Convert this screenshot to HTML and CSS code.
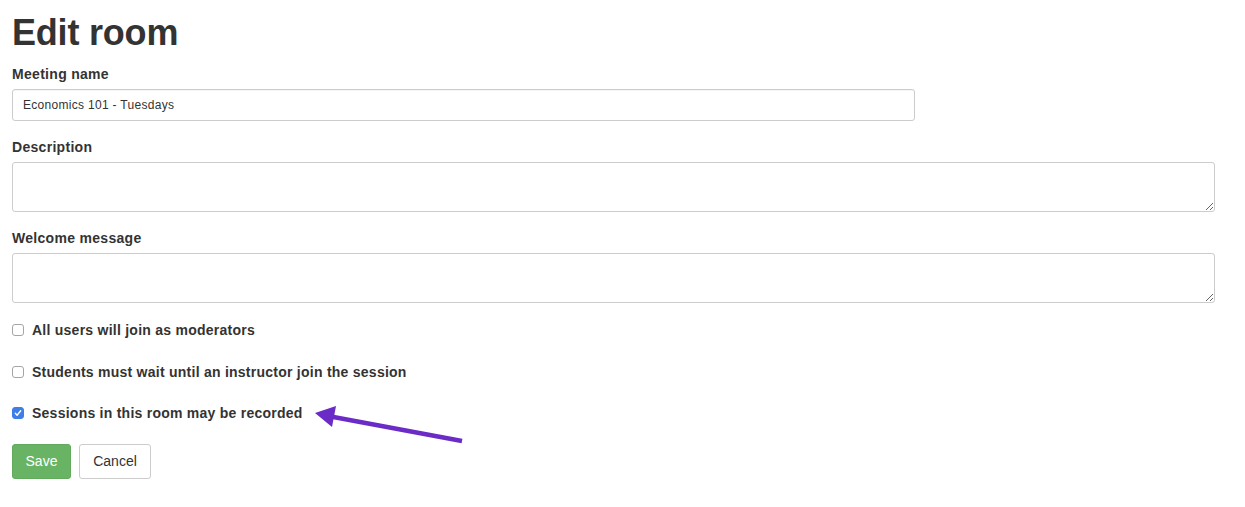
FILE: index.html
```html
<!DOCTYPE html>
<html>
<head>
<meta charset="utf-8">
<link rel="stylesheet" href="styles.css">
</head>
<body>
<div class="page">
  <h1 class="title">Edit room</h1>
  <form class="form">
    <div class="group">
      <label class="label">Meeting name</label>
      <input class="input" type="text" value="Economics 101 - Tuesdays">
    </div>
    <div class="group">
      <label class="label">Description</label>
      <textarea class="textarea"></textarea>
    </div>
    <div class="group group-last">
      <label class="label">Welcome message</label>
      <textarea class="textarea"></textarea>
    </div>
    <label class="check"><span class="box"></span>All users will join as moderators</label>
    <label class="check"><span class="box"></span>Students must wait until an instructor join the session</label>
    <label class="check"><span class="box checked"><svg viewBox="0 0 12 12" width="12" height="12"><path d="M3.3 6.3 L5.1 8.2 L8.7 3.8" fill="none" stroke="#fff" stroke-width="1.4" stroke-linecap="round" stroke-linejoin="round"/></svg></span>Sessions in this room may be recorded</label>
    <div class="actions">
      <button type="button" class="btn btn-save">Save</button>
      <button type="button" class="btn btn-cancel">Cancel</button>
    </div>
  </form>
  <svg class="arrow" width="1245" height="507" viewBox="0 0 1245 507">
    <line x1="462" y1="441" x2="328" y2="416" stroke="#6a2bc6" stroke-width="4.5" stroke-linecap="butt"/>
    <polygon points="315,413 336,406 332,427" fill="#6a2bc6"/>
  </svg>
</div>
</body>
</html>
```

FILE: styles.css
```css
html, body {
  margin: 0;
  padding: 0;
  background: #fff;
}
body {
  font-family: "Liberation Sans", Arial, Helvetica, sans-serif;
  color: #333;
  font-size: 14px;
  line-height: 20px;
}
.page {
  padding: 0 12px;
  position: relative;
  height: 507px;
  box-sizing: border-box;
}
.title {
  margin: 0;
  padding-top: 13px;
  font-size: 36px;
  font-weight: bold;
  line-height: 40px;
  color: #333;
  letter-spacing: -0.2px;
}
.form {
  margin-top: 11px;
}
.group {
  margin-bottom: 16px;
}
.group-last {
  margin-bottom: 17px;
}
.label {
  display: block;
  font-weight: bold;
  font-size: 14px;
  line-height: 20px;
  margin-bottom: 5px;
  letter-spacing: 0.3px;
}
.input {
  display: block;
  box-sizing: border-box;
  width: 903px;
  height: 32px;
  border: 1px solid #ccc;
  border-radius: 3px;
  padding: 0 10px;
  font-family: "Liberation Sans", Arial, sans-serif;
  font-size: 12px;
  letter-spacing: 0.3px;
  color: #333;
  box-shadow: inset 0 1px 1px rgba(0,0,0,0.04);
}
.textarea {
  display: block;
  box-sizing: border-box;
  width: 1203px;
  height: 50px;
  border: 1px solid #ccc;
  border-radius: 3px;
  margin: 0;
  font-family: "Liberation Sans", Arial, sans-serif;
}
.check {
  display: flex;
  align-items: center;
  height: 20px;
  font-weight: bold;
  font-size: 14px;
  letter-spacing: 0.25px;
  margin-bottom: 21.5px;
}
.box {
  width: 12px;
  height: 12px;
  box-sizing: border-box;
  border: 1px solid #a5a5a5;
  border-radius: 3px;
  margin-right: 8px;
  background: #fff;
  display: flex;
  flex-shrink: 0;
}
.box.checked {
  background: #3d7fe6;
  border-color: #3d7fe6;
}
.box svg {
  margin: -1px;
}
.actions {
  display: flex;
  gap: 8px;
  margin-top: -1px;
}
.btn {
  height: 35px;
  box-sizing: border-box;
  border-radius: 3px;
  font-family: "Liberation Sans", Arial, sans-serif;
  font-size: 14px;
  padding: 0;
  cursor: pointer;
}
.btn-save {
  width: 59px;
  background: #69b364;
  border: 1px solid #62ab5d;
  color: #fff;
}
.btn-cancel {
  width: 72px;
  background: #fff;
  border: 1px solid #ccc;
  color: #333;
}
.arrow {
  position: absolute;
  left: 0;
  top: 0;
  pointer-events: none;
}
```
